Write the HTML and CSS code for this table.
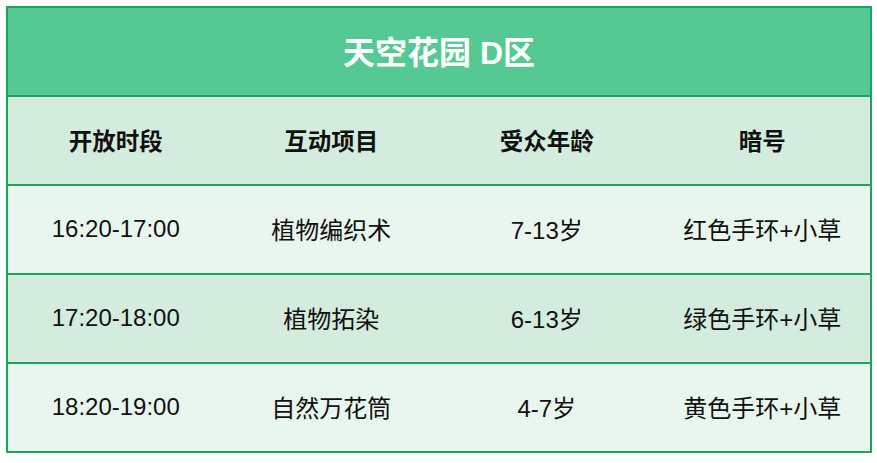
FILE: index.html
```html
<!DOCTYPE html>
<html lang="zh">
<head>
<meta charset="utf-8">
<link rel="stylesheet" href="styles.css">
</head>
<body>
<div class="board">
  <div class="title">天空花园 D区</div>
  <div class="row head">
    <div class="cell">开放时段</div>
    <div class="cell">互动项目</div>
    <div class="cell">受众年龄</div>
    <div class="cell">暗号</div>
  </div>
  <div class="row light">
    <div class="cell">16:20-17:00</div>
    <div class="cell">植物编织术</div>
    <div class="cell">7-13岁</div>
    <div class="cell">红色手环+小草</div>
  </div>
  <div class="row mid">
    <div class="cell">17:20-18:00</div>
    <div class="cell">植物拓染</div>
    <div class="cell">6-13岁</div>
    <div class="cell">绿色手环+小草</div>
  </div>
  <div class="row light">
    <div class="cell">18:20-19:00</div>
    <div class="cell">自然万花筒</div>
    <div class="cell">4-7岁</div>
    <div class="cell">黄色手环+小草</div>
  </div>
</div>
</body>
</html>
```

FILE: styles.css
```css
html, body {
  margin: 0;
  padding: 0;
  background: #ffffff;
}
body {
  padding: 6px 0 0 6px;
  font-family: "Liberation Sans", "Noto Sans CJK SC", sans-serif;
  color: #111;
}
.board {
  width: 866px;
  box-sizing: border-box;
  border: 2px solid #1ba65e;
}
.title {
  height: 87px;
  box-sizing: border-box;
  padding-bottom: 4px;
  background: #55c993;
  color: #fff;
  font-weight: bold;
  font-size: 32px;
  display: flex;
  align-items: center;
  justify-content: center;
}
.row {
  display: grid;
  grid-template-columns: repeat(4, 1fr);
  height: 87px;
  border-top: 2px solid #1ba65e;
}
.cell {
  display: flex;
  align-items: center;
  justify-content: center;
  font-size: 24px;
  padding-bottom: 2px;
}
.head {
  background: #d3ecdd;
}
.head .cell {
  font-weight: bold;
  font-size: 23.5px;
}
.light {
  background: #e8f6ee;
}
.mid {
  background: #d3ecdd;
}
```
